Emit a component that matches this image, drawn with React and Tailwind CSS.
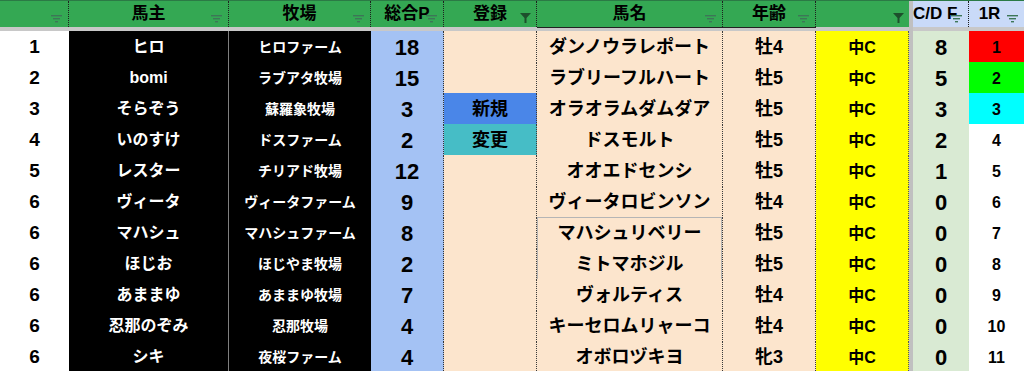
const rows = [
  { rank: 1, owner: "ヒロ", farm: "ヒロファーム", pts: 18, reg: "", horse: "ダンノウラレポート", age: "牡4", cd: 8, r1: 1, r1bg: "bg-[#ff0000]" },
  { rank: 2, owner: "bomi", farm: "ラブアタ牧場", pts: 15, reg: "", horse: "ラブリーフルハート", age: "牡5", cd: 5, r1: 2, r1bg: "bg-[#00ff00]" },
  { rank: 3, owner: "そらぞう", farm: "蘇羅象牧場", pts: 3, reg: "新規", horse: "オラオラムダムダア", age: "牡5", cd: 3, r1: 3, r1bg: "bg-[#00ffff]" },
  { rank: 4, owner: "いのすけ", farm: "ドスファーム", pts: 2, reg: "変更", horse: "ドスモルト", age: "牡5", cd: 2, r1: 4, r1bg: "bg-white" },
  { rank: 5, owner: "レスター", farm: "チリアド牧場", pts: 12, reg: "", horse: "オオエドセンシ", age: "牡5", cd: 1, r1: 5, r1bg: "bg-white" },
  { rank: 6, owner: "ヴィータ", farm: "ヴィータファーム", pts: 9, reg: "", horse: "ヴィータロビンソン", age: "牡4", cd: 0, r1: 6, r1bg: "bg-white" },
  { rank: 6, owner: "マハシュ", farm: "マハシュファーム", pts: 8, reg: "", horse: "マハシュリベリー", age: "牡5", cd: 0, r1: 7, r1bg: "bg-white", boxed: true },
  { rank: 6, owner: "ほじお", farm: "ほじやま牧場", pts: 2, reg: "", horse: "ミトマホジル", age: "牡5", cd: 0, r1: 8, r1bg: "bg-white", boxed: true },
  { rank: 6, owner: "あままゆ", farm: "あままゆ牧場", pts: 7, reg: "", horse: "ヴォルティス", age: "牡4", cd: 0, r1: 9, r1bg: "bg-white" },
  { rank: 6, owner: "忍那のぞみ", farm: "忍那牧場", pts: 4, reg: "", horse: "キーセロムリャーコ", age: "牡4", cd: 0, r1: 10, r1bg: "bg-white" },
  { rank: 6, owner: "シキ", farm: "夜桜ファーム", pts: 4, reg: "", horse: "オボロヅキヨ", age: "牝3", cd: 0, r1: 11, r1bg: "bg-white" },
]

const cols = "grid grid-cols-[69px_160px_142px_73px_93px_186px_93px_93px_4px_56px_55px]"

function FilterIcon({ active }) {
  if (active) {
    return (
      <svg className="absolute right-[5px] top-[12px]" width="11" height="10" viewBox="0 0 11 10">
        <path d="M0 0 H11 L6.5 5 V10 H4.5 V5 Z" fill="#1d4f2c" />
      </svg>
    )
  }
  return (
    <svg className="absolute right-[6px] top-[14px]" width="11" height="8" viewBox="0 0 11 8">
      <rect x="0" y="0" width="11" height="1.4" fill="#3d7657" />
      <rect x="2" y="3" width="7" height="1.4" fill="#3d7657" />
      <rect x="4" y="6" width="3" height="1.4" fill="#3d7657" />
    </svg>
  )
}

function Head({ label, bg = "bg-[#34a853]", active, className = "" }) {
  return (
    <div className={`relative flex items-center justify-center border-r border-dotted border-[#1f1f1f] text-[17px] font-bold text-black overflow-hidden whitespace-nowrap ${bg} ${className}`}>
      <span className="-mt-[1px]">{label}</span>
      <FilterIcon active={active} />
    </div>
  )
}

function Row({ r }) {
  const dot = "border-b border-r border-dotted border-[#3a3a3a]"
  const regBg = r.reg === "新規" ? "bg-[#4a86e8]" : r.reg === "変更" ? "bg-[#46bdc6]" : "bg-[#fce5cd]"
  let box = ""
  if (r.horse === "マハシュリベリー") box = "shadow-[inset_1px_1px_0_#b5b5b5,inset_-1px_0_0_#b5b5b5]"
  else if (r.boxed) box = "shadow-[inset_1px_0_0_#b5b5b5,inset_-1px_0_0_#b5b5b5]"
  return (
    <div className={`${cols} h-[31px]`}>
      <div className="flex items-center justify-center bg-white border-b border-[#d9d9d9] text-[19px] font-bold">
        {r.rank}
      </div>
      <div className="flex items-center justify-center bg-black text-white border-b-2 border-r border-[#7f7f7f] text-[16px] font-bold">
        {r.owner}
      </div>
      <div className="flex items-center justify-center bg-black text-white border-b-2 border-[#7f7f7f] text-[14px] font-bold">
        {r.farm}
      </div>
      <div className="flex items-center justify-center bg-[#a4c2f4] border-b border-r border-[#8eaee0] [border-right-style:dotted] [border-right-color:#333] text-[22px] font-bold">
        {r.pts}
      </div>
      <div className={`flex items-center justify-center ${regBg} ${dot} text-[18px] font-bold`}>
        {r.reg}
      </div>
      <div className={`flex items-center justify-center bg-[#fce5cd] ${dot} text-[18px] font-bold ${box}`}>
        {r.horse}
      </div>
      <div className={`flex items-center justify-center bg-[#fce5cd] ${dot} text-[18px] font-bold`}>
        {r.age}
      </div>
      <div className="flex items-center justify-center bg-[#ffff00] border-b border-r border-dotted border-[#555] text-[16px] font-bold">
        中C
      </div>
      <div className="bg-[#c0c0c0]" />
      <div className="flex items-center justify-center bg-[#d9ead3] border-b border-dotted border-[#9a9a9a] text-[22px] font-bold">
        {r.cd}
      </div>
      <div className={`flex items-center justify-center ${r.r1bg} border-b border-[#e3e3e3] text-[16px] font-bold`}>
        {r.r1}
      </div>
    </div>
  )
}

export default function App() {
  return (
    <div className="w-[1024px] h-[371px] overflow-hidden bg-white text-black font-['Liberation_Sans','Noto_Sans_CJK_JP',sans-serif]">
      <div className={`${cols} h-[27px] border-t border-[#2b7a45]`}>
        <Head label="" />
        <Head label="馬主" />
        <Head label="牧場" />
        <Head label="総合P" />
        <Head label="登録" active />
        <Head label="馬名" />
        <Head label="年齢" />
        <Head label="" active className="border-r-0" />
        <div className="bg-[#c0c0c0]" />
        <Head label="C/D F" bg="bg-[#c9daf8]" className="justify-start" />
        <Head label="1R" bg="bg-[#c9daf8]" className="border-r-0 pr-[14px]" />
      </div>
      <div className={`${cols} h-[4px]`}>
        <div className="bg-[#c8c8c8]" />
        <div className="bg-[#c8c8c8]" />
        <div className="bg-[#c8c8c8]" />
        <div className="bg-[#c8c8c8]" />
        <div className="bg-[#c8c8c8]" />
        <div className="bg-[#c8c8c8] border-t border-[#222]" />
        <div className="bg-[#c8c8c8] border-t border-[#222]" />
        <div className="bg-[#c8c8c8]" />
        <div className="bg-[#c0c0c0]" />
        <div className="bg-[#c8c8c8]" />
        <div className="bg-[#c8c8c8]" />
      </div>
      {rows.map((r, i) => (
        <Row key={i} r={r} />
      ))}
    </div>
  )
}
